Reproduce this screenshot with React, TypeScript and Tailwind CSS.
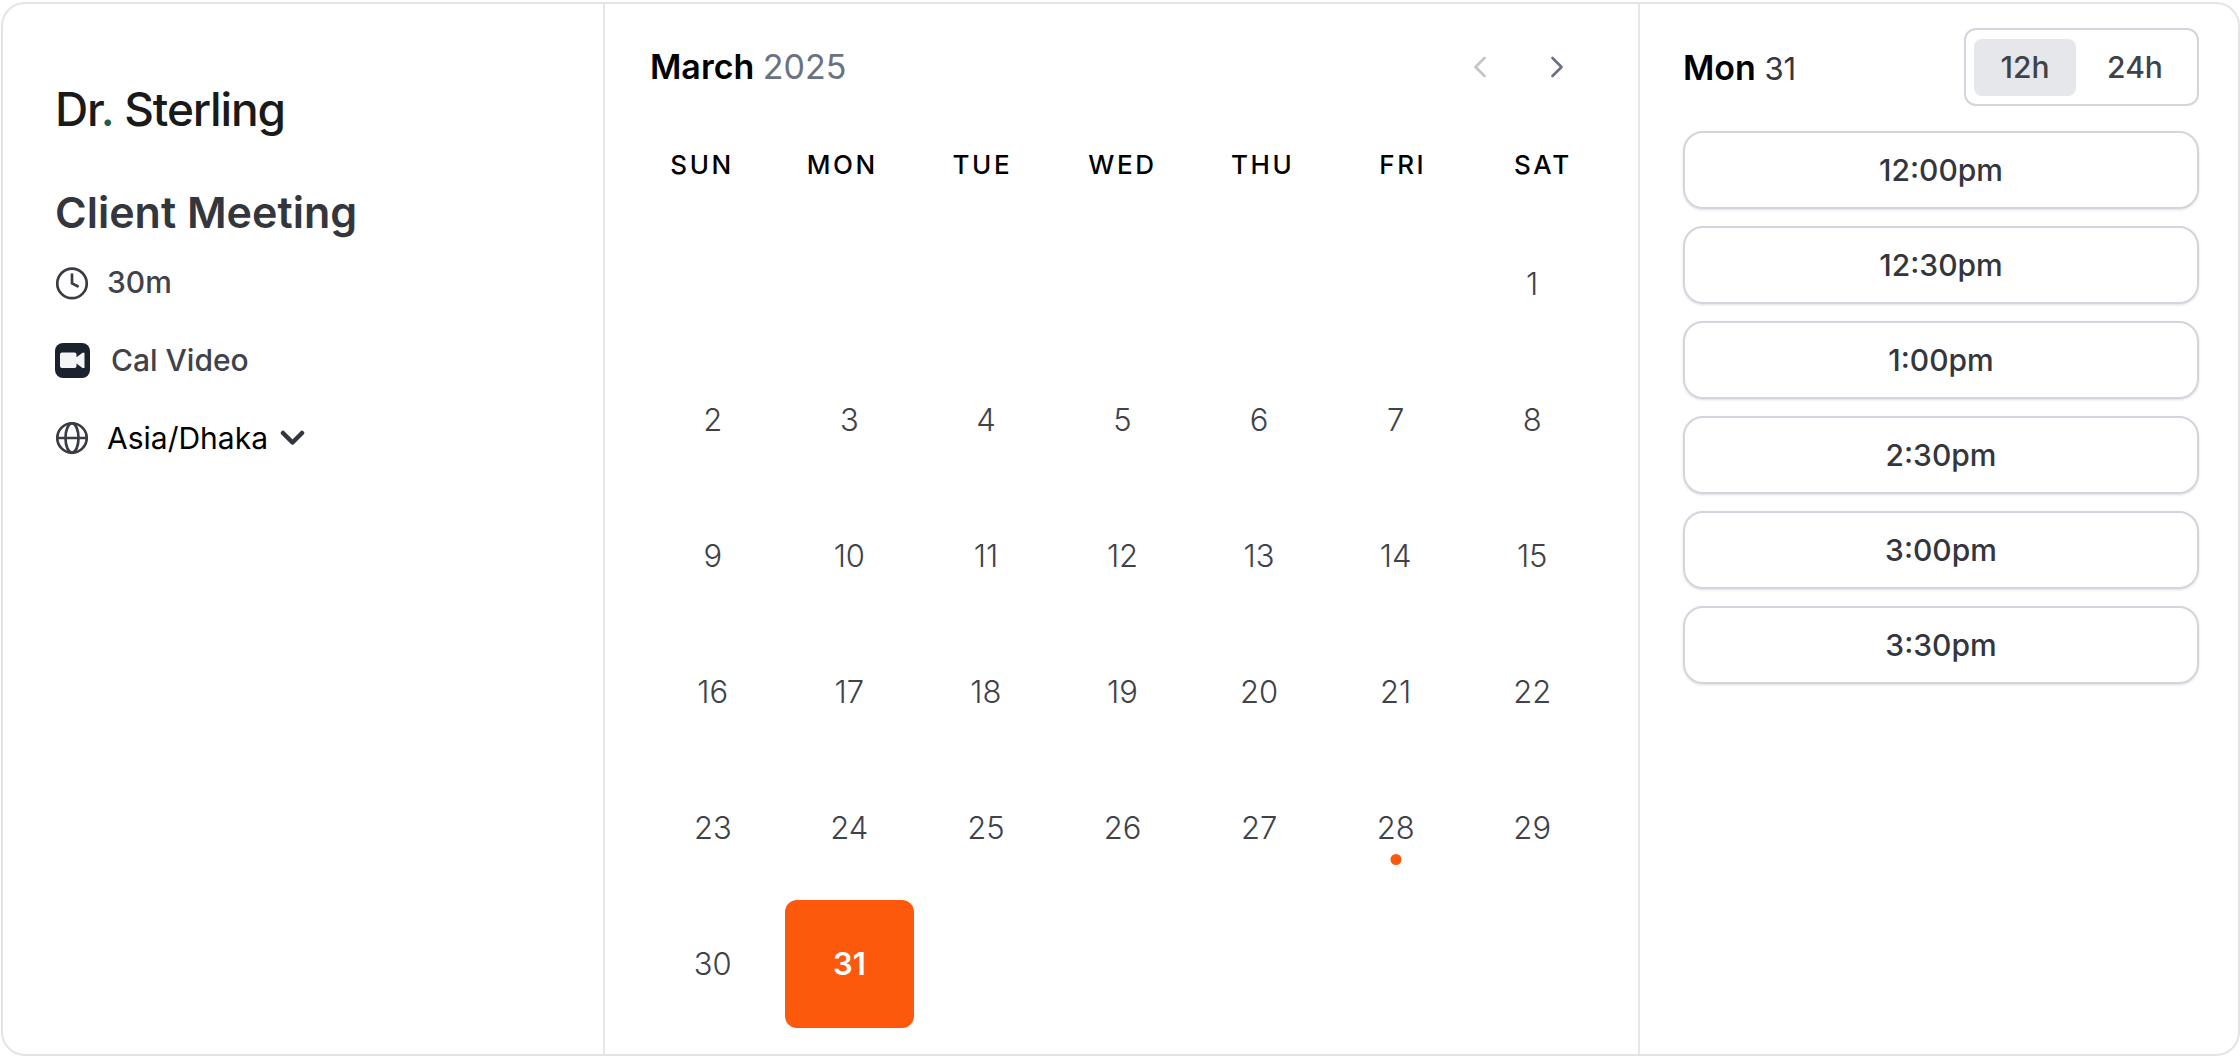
import { ChevronLeft, ChevronRight } from 'lucide-react';
import { useState } from 'react';

const weekdays = ['Sun', 'Mon', 'Tue', 'Wed', 'Thu', 'Fri', 'Sat'];
const days = Array.from({ length: 31 }, (_, i) => i + 1);
const today = 28;

const slots = [
  { h12: '12:00pm', h24: '12:00' },
  { h12: '12:30pm', h24: '12:30' },
  { h12: '1:00pm', h24: '13:00' },
  { h12: '2:30pm', h24: '14:30' },
  { h12: '3:00pm', h24: '15:00' },
  { h12: '3:30pm', h24: '15:30' },
];

function ClockIcon() {
  return (
    <svg viewBox="0 0 24 24" className="size-[34px] overflow-visible" fill="none" stroke="#3a3c44" strokeWidth="1.9" strokeLinecap="round" strokeLinejoin="round" aria-hidden="true">
      <circle cx="12" cy="13" r="10.4" />
      <path d="M12 6.700v6.300l4 2" />
    </svg>
  );
}

function GlobeIcon() {
  return (
    <svg viewBox="0 0 24 24" className="size-[34px] overflow-visible" fill="none" stroke="#3a3c44" strokeWidth="1.9" strokeLinecap="round" strokeLinejoin="round" aria-hidden="true">
      <circle cx="12" cy="12" r="10.400" />
      <ellipse cx="12" cy="12" rx="4.600" ry="10.400" />
      <path d="M1.600 12h20.800" />
    </svg>
  );
}

function VideoIcon() {
  return (
    <svg viewBox="0 0 35 35" className="size-[35px]" aria-hidden="true">
      <rect width="35" height="35" rx="8" fill="#1b222d" />
      <path d="M7 9.500h12.500a2 2 0 0 1 2 2v2.800l6-4.500h2v15.200h-2l-6-4.500V23a2 2 0 0 1-2 2H7a2 2 0 0 1-2-2V11.500a2 2 0 0 1 2-2z" fill="#f3f4f6" />
    </svg>
  );
}

function EventInfo() {
  return (
    <aside className="w-[602px] shrink-0 border-r-2 border-gray-200 pt-[72px] pl-[52px] text-[30px]/[38px] font-medium text-[#404249]">
      <p className="text-[46px]/[66px] tracking-tight text-[#1a1a1a]">
        Dr<span className="text-[#26594d]">.</span> Sterling
      </p>
      <h1 className="mt-10 text-[43px]/[60px] font-semibold text-[#34363e]">Client Meeting</h1>
      <ul className="mt-[21px] flex flex-col gap-10">
        <li className="flex items-center gap-[18px]">
          <ClockIcon />
          30m
        </li>
        <li className="flex items-center gap-[21px]">
          <VideoIcon />
          Cal Video
        </li>
        <li className="flex items-center gap-[18px]">
          <GlobeIcon />
          <button type="button" className="flex items-center gap-3 font-normal text-black">
            Asia/Dhaka
            <svg viewBox="0 0 25 16" className="h-4 w-[25px]" fill="none" stroke="#34363e" strokeWidth="4.500" strokeLinecap="round" strokeLinejoin="round" aria-hidden="true">
              <path d="M3 3l9.500 9.500L22 3" />
            </svg>
          </button>
        </li>
      </ul>
    </aside>
  );
}

function Calendar({ selected, onSelect }: { selected: number; onSelect: (day: number) => void }) {
  return (
    <section className="flex-1 border-r-2 border-gray-200 pt-6 pr-[25px] pb-[26px] pl-[27px]">
      <div className="flex items-center justify-between px-[18px]">
        <h2 className="text-[34px]/[78px] font-semibold text-black">
          March <span className="font-normal text-gray-500">2025</span>
        </h2>
        <div className="flex text-gray-500">
          <button type="button" disabled aria-label="Previous month" className="flex h-[78px] w-[77px] items-center justify-center opacity-40">
            <ChevronLeft size={36} strokeWidth={1.8} />
          </button>
          <button type="button" aria-label="Next month" className="flex h-[78px] w-[77px] items-center justify-center">
            <ChevronRight size={36} strokeWidth={1.8} />
          </button>
        </div>
      </div>

      <div className="mt-10 grid grid-cols-7 text-center text-[26px]/[38px] font-medium tracking-widest text-black uppercase">
        {weekdays.map((name) => (
          <div key={name}>{name}</div>
        ))}
      </div>

      <div className="mt-9 grid grid-cols-7 gap-x-[7px] gap-y-2 px-4">
        {days.map((day) => (
          <button
            key={day}
            type="button"
            onClick={() => onSelect(day)}
            className={`relative h-32 rounded-xl text-[31px] ${day === 1 ? 'col-start-7' : ''} ${
              day === selected ? 'bg-[#fc590d] font-semibold text-white' : 'font-light text-[#404249]'
            }`}
          >
            {day}
            {day === today && (
              <span className="absolute bottom-[27px] left-1/2 size-[11px] -translate-x-1/2 rounded-full bg-[#fc590d]" />
            )}
          </button>
        ))}
      </div>
    </section>
  );
}

function TimeSlots({ selected }: { selected: number }) {
  const [format, setFormat] = useState<'12h' | '24h'>('12h');

  return (
    <section className="w-[598px] shrink-0 pt-6 pr-[39px] pl-[43px]">
      <div className="flex items-center justify-between">
        <h2 className="text-[34px] font-semibold text-black">
          {weekdays[(selected + 5) % 7]} <span className="text-[31px] font-normal text-[#35373d]">{selected}</span>
        </h2>
        <div className="flex h-[78px] items-center gap-2 rounded-xl border-2 border-gray-300 pr-[11px] pl-2 text-[30px] font-medium">
          {(['12h', '24h'] as const).map((option) => (
            <button
              key={option}
              type="button"
              aria-pressed={format === option}
              onClick={() => setFormat(option)}
              className={`h-[57px] w-[102px] rounded-lg text-[#404249] ${format === option ? 'bg-gray-200' : ''}`}
            >
              {option}
            </button>
          ))}
        </div>
      </div>

      <div className="mt-[25px] flex flex-col gap-[17px]">
        {slots.map((slot) => (
          <button
            key={slot.h12}
            type="button"
            className="h-[78px] rounded-[20px] border-2 border-gray-300 text-[30px] font-medium text-[#34363e] shadow-sm"
          >
            {format === '12h' ? slot.h12 : slot.h24}
          </button>
        ))}
      </div>
    </section>
  );
}

export default function App() {
  const [selected, setSelected] = useState(31);

  return (
    <main className="pt-0.5 font-['Inter',sans-serif]">
      <div className="ml-px flex rounded-3xl border-2 border-[#e4e4e4] bg-white">
        <EventInfo />
        <Calendar selected={selected} onSelect={setSelected} />
        <TimeSlots selected={selected} />
      </div>
    </main>
  );
}
